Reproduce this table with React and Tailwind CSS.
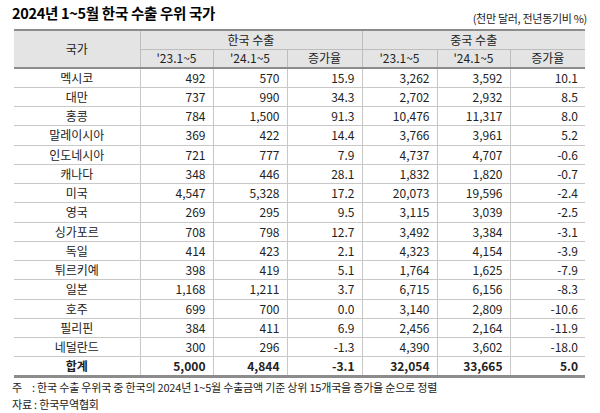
import React from "react";

const rows = [
  ["멕시코", "492", "570", "15.9", "3,262", "3,592", "10.1"],
  ["대만", "737", "990", "34.3", "2,702", "2,932", "8.5"],
  ["홍콩", "784", "1,500", "91.3", "10,476", "11,317", "8.0"],
  ["말레이시아", "369", "422", "14.4", "3,766", "3,961", "5.2"],
  ["인도네시아", "721", "777", "7.9", "4,737", "4,707", "-0.6"],
  ["캐나다", "348", "446", "28.1", "1,832", "1,820", "-0.7"],
  ["미국", "4,547", "5,328", "17.2", "20,073", "19,596", "-2.4"],
  ["영국", "269", "295", "9.5", "3,115", "3,039", "-2.5"],
  ["싱가포르", "708", "798", "12.7", "3,492", "3,384", "-3.1"],
  ["독일", "414", "423", "2.1", "4,323", "4,154", "-3.9"],
  ["튀르키예", "398", "419", "5.1", "1,764", "1,625", "-7.9"],
  ["일본", "1,168", "1,211", "3.7", "6,715", "6,156", "-8.3"],
  ["호주", "699", "700", "0.0", "3,140", "2,809", "-10.6"],
  ["필리핀", "384", "411", "6.9", "2,456", "2,164", "-11.9"],
  ["네덜란드", "300", "296", "-1.3", "4,390", "3,602", "-18.0"],
];

const total = ["합계", "5,000", "4,844", "-3.1", "32,054", "33,665", "5.0"];

const Row = ({ cells, bold }) => (
  <tr className={"h-[19.25px] border-b border-[#c8c8c8] " + (bold ? "font-bold" : "")}>
    {cells.map((c, i) =>
      i === 0 ? (
        <td key={i} className="text-center border-r border-[#c8c8c8]">{c}</td>
      ) : (
        <td
          key={i}
          className={
            "text-right pr-[7px] " + (i < 6 ? "border-r border-[#c8c8c8]" : "")
          }
        >
          {c}
        </td>
      )
    )}
  </tr>
);

export default function App() {
  return (
    <div
      className="w-[600px] h-[413px] bg-white text-[#222] px-[14px]"
      style={{ fontFamily: "'Noto Sans CJK KR', 'Noto Sans', sans-serif" }}
    >
      <div className="flex items-end justify-between h-[27px] -mx-[2px]">
        <h1 className="text-[14.5px] font-bold text-black leading-none pb-[7px] tracking-[-0.3px]">
          2024년 1~5월 한국 수출 우위 국가
        </h1>
        <span className="text-[11px] leading-none pb-[3px] mr-[1px] tracking-[-0.3px]">
          (천만 달러, 전년동기비 %)
        </span>
      </div>

      <table className="w-[571px] table-fixed border-collapse text-[12px] leading-none mt-[2px] border-t-2 border-b-[3px] border-t-[#8c8c8c] border-b-[#8c8c8c]">
        <colgroup>
          <col className="w-[126px]" />
          <col className="w-[73px]" />
          <col className="w-[74px]" />
          <col className="w-[75px]" />
          <col className="w-[75px]" />
          <col className="w-[73px]" />
          <col className="w-[75px]" />
        </colgroup>
        <thead className="bg-[#e4e4e4] border-b-2 border-[#8c8c8c]">
          <tr className="h-[19px]">
            <th rowSpan={2} className="font-normal border-r border-[#bdbdbd]">국가</th>
            <th colSpan={3} className="font-normal border-r border-b border-[#bdbdbd]">한국 수출</th>
            <th colSpan={3} className="font-normal border-b border-[#bdbdbd]">중국 수출</th>
          </tr>
          <tr className="h-[19px]">
            <th className="font-normal border-r border-[#bdbdbd]">'23.1~5</th>
            <th className="font-normal border-r border-[#bdbdbd]">'24.1~5</th>
            <th className="font-normal border-r border-[#bdbdbd]">증가율</th>
            <th className="font-normal border-r border-[#bdbdbd]">'23.1~5</th>
            <th className="font-normal border-r border-[#bdbdbd]">'24.1~5</th>
            <th className="font-normal">증가율</th>
          </tr>
        </thead>
        <tbody>
          {rows.map((r) => (
            <Row key={r[0]} cells={r} />
          ))}
          <Row cells={total} bold />
        </tbody>
      </table>

      <div className="text-[11px] leading-[17px] mt-[1px] -mx-[2px] tracking-[-0.2px]">
        <p>
          <span className="inline-block w-[20px]">주</span>: 한국 수출 우위국 중 한국의 2024년 1~5월 수출금액 기준 상위 15개국을 증가율 순으로 정렬
        </p>
        <p>자료 : 한국무역협회</p>
      </div>
    </div>
  );
}
